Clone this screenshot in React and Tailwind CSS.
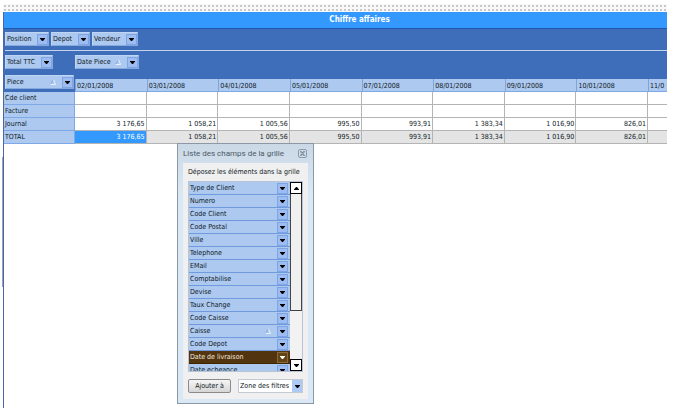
import React, { useState } from 'react';

const days = [
  { date: '02/01/2008', journal: '3 176,65' },
  { date: '03/01/2008', journal: '1 058,21' },
  { date: '04/01/2008', journal: '1 005,56' },
  { date: '05/01/2008', journal: '995,50' },
  { date: '07/01/2008', journal: '993,91' },
  { date: '08/01/2008', journal: '1 383,34' },
  { date: '09/01/2008', journal: '1 016,90' },
  { date: '10/01/2008', journal: '826,01' },
];

const rows = ['Cde client', 'Facture', 'Journal', 'TOTAL'];

const fields = [
  'Type de Client',
  'Numero',
  'Code Client',
  'Code Postal',
  'Ville',
  'Telephone',
  'EMail',
  'Comptabilise',
  'Devise',
  'Taux Change',
  'Code Caisse',
  'Caisse',
  'Code Depot',
  'Date de livraison',
  'Date echeance',
];

const Arrow = ({ up }) => (
  <svg width="5" height="3" viewBox="0 0 5 3" fill="currentColor" aria-hidden="true">
    {up ? <path d="M0 3V2.4L2 0H3L5 2.4V3Z" /> : <path d="M0 0H5V0.6L3 3H2L0 0.6Z" />}
  </svg>
);

const SortMark = () => (
  <svg width="6" height="6" viewBox="0 0 6 6" className="mr-1.5 shrink-0" aria-hidden="true">
    <path d="M0.5 5.5L3.5 0.5" stroke="#7f9fd6" strokeWidth="0.8" fill="none" />
    <path d="M3.5 0.5L5.5 5.5H0.5" stroke="#eef4fd" strokeWidth="0.9" fill="none" />
  </svg>
);

const FieldChip = ({ label, sorted, className = '' }) => (
  <button
    type="button"
    className={`flex h-[14px] items-center border border-[#bfd5f6] border-r-[#86a9e0] border-b-[#86a9e0] bg-[#adc9f0] pl-px text-left ${className}`}
  >
    <span className="grow whitespace-nowrap">{label}</span>
    {sorted && <SortMark />}
    <span className="flex h-[11px] w-[11px] shrink-0 items-center justify-center border border-[#7fa4e3] bg-[#9dbdf2] text-black">
      <Arrow />
    </span>
  </button>
);

const PivotGrid = () => (
  <table className="w-full table-fixed border-separate border-spacing-0">
    <colgroup>
      <col className="w-[71px]" />
      {days.map((day) => (
        <col key={day.date} />
      ))}
      <col className="w-[19px]" />
    </colgroup>
    <thead>
      <tr className="h-[17px] bg-[#3e6db9]">
        <th className="p-0 pr-px pl-px align-top font-normal">
          <FieldChip label="Piece" sorted className="w-full" />
        </th>
        {days.map((day) => (
          <th key={day.date} className="p-0 align-bottom font-normal">
            <div className="h-[13px] border-b border-l border-b-[#7fa9e6] border-l-[#7fa4dc] bg-[#adc9f0] pl-px text-left leading-[14px]">
              {day.date}
            </div>
          </th>
        ))}
        <th className="p-0 align-bottom font-normal">
          <div className="h-[13px] border-b border-l border-b-[#7fa9e6] border-l-[#7fa4dc] bg-[#adc9f0] pl-px text-left leading-[14px]">
            11/0
          </div>
        </th>
      </tr>
    </thead>
    <tbody>
      {rows.map((row) => {
        const total = row === 'TOTAL';
        const filled = total || row === 'Journal';
        return (
          <tr key={row} className={`h-[13px] ${total ? 'bg-[#e4e4e4]' : 'bg-white'}`}>
            <th className="border-r border-b border-[#7fa9e6] bg-[#adc9f0] p-0 pl-px text-left font-normal leading-3">
              {row}
            </th>
            {days.map((day, i) => (
              <td
                key={day.date}
                className={`border-r border-b border-[#b4b4b4] p-0 pr-px text-right leading-3 ${
                  total && i === 0 ? 'bg-[#3399ff] text-white' : ''
                }`}
              >
                {filled ? day.journal : ''}
              </td>
            ))}
            <td className="border-b border-[#b4b4b4] p-0"></td>
          </tr>
        );
      })}
    </tbody>
  </table>
);

const FieldList = ({ selected, onSelect }) => (
  <div className="flex h-[191px] border border-[#b8c4d4] bg-[#f2f2f2]">
    <ul className="grow overflow-hidden">
      {fields.map((field) => {
        const active = field === selected;
        return (
          <li key={field}>
            <button
              type="button"
              onClick={() => onSelect(field)}
              className={`flex h-[13px] w-full items-center border-b pl-px text-left ${
                active ? 'border-[#3d2500] bg-[#52340f] text-[#f3e9dc]' : 'border-[#6f9add] bg-[#adc9f0]'
              }`}
            >
              <span className="grow">{field}</span>
              {field === 'Caisse' && <SortMark />}
              <span
                className={`mr-0.5 flex h-[11px] w-[11px] items-center justify-center border ${
                  active ? 'border-[#8a6a3c] bg-[#654213] text-white' : 'border-[#7fa4e3] bg-[#9dbdf2] text-black'
                }`}
              >
                <Arrow />
              </span>
            </button>
          </li>
        );
      })}
    </ul>
    <div className="flex w-3 shrink-0 flex-col text-black">
      <button type="button" aria-label="Monter" className="flex h-3 items-center justify-center border border-black bg-white">
        <Arrow up />
      </button>
      <div className="h-[117px] border border-t-0 border-[#444] bg-[#f0f0f0]"></div>
      <div className="grow"></div>
      <button type="button" aria-label="Descendre" className="flex h-3 items-center justify-center border border-black bg-white">
        <Arrow />
      </button>
    </div>
  </div>
);

const FieldDialog = () => {
  const [selected, setSelected] = useState('Date de livraison');
  const [zone, setZone] = useState('Zone des filtres');

  return (
    <div
      role="dialog"
      aria-labelledby="dialog-title"
      className="absolute top-[143px] left-[177px] w-[137px] border border-[#8c98a6] bg-gradient-to-b from-[#cbd9e6] to-[#dae7f5] to-20% px-[5px] pb-1"
    >
      <div className="flex h-[19px] items-center justify-between">
        <h2 id="dialog-title" className="font-[Roboto,sans-serif] text-[8px] text-[#4c5a68]">
          Liste des champs de la grille
        </h2>
        <button
          type="button"
          aria-label="Fermer"
          className="mr-px flex h-[9px] w-[9px] items-center justify-center rounded-[2px] border border-[#8d9bab]"
        >
          <svg width="5" height="5" viewBox="0 0 5 5" fill="none" stroke="#6b7886" strokeWidth="0.8" aria-hidden="true">
            <path d="M0.5 0.5H1.5L2.5 2L3.5 0.5H4.5L3.2 2.5L4.5 4.5H3.5L2.5 3L1.5 4.5H0.5L1.8 2.5Z" />
          </svg>
        </button>
      </div>
      <div className="bg-[#f0f0f0] px-[5px] pb-1.5">
        <p className="flex h-[18px] items-center whitespace-nowrap">Déposez les éléments dans la grille</p>
        <FieldList selected={selected} onSelect={setSelected} />
        <div className="mt-[7px] flex items-center justify-between">
          <button
            type="button"
            className="h-[14px] w-[43px] rounded-[2px] border border-[#8a8a8a] bg-gradient-to-b from-[#f6f6f6] to-[#d6d6d6] leading-3"
          >
            Ajouter à
          </button>
          <div className="relative w-[65px]">
            <select
              aria-label="Zone"
              value={zone}
              onChange={(e) => setZone(e.target.value)}
              className="block h-[14px] w-full appearance-none border border-[#c3cad3] bg-white pl-px"
            >
              <option>Zone des filtres</option>
              <option>Zone des lignes</option>
              <option>Zone des colonnes</option>
            </select>
            <span className="pointer-events-none absolute inset-y-px right-px flex w-2.5 items-center justify-center bg-[#adc9f5] text-black">
              <Arrow />
            </span>
          </div>
        </div>
      </div>
    </div>
  );
};

const App = () => (
  <div className="relative min-h-screen bg-white pt-1 pr-1.5 pb-1 pl-0.5 font-['DejaVu_Sans_Condensed','Noto_Sans',sans-serif] text-[7px] leading-3 text-[#101a26]">
    <div className="flex min-h-[404px] flex-col">
      <div className="ml-px h-2 bg-[#f8f8f8] bg-[radial-gradient(#c8c8c8_1px,transparent_1px)] bg-size-[4px_4px]"></div>
      <div className="flex grow">
        <div className="flex w-px shrink-0 flex-col pt-[145px]">
          <div className="h-[130px] bg-[#98a2b4]"></div>
        </div>
        <main className="min-w-0 grow border-l border-[#4a67a8]">
          <h1 className="flex h-[17px] items-center justify-center border-b border-[#1f56b0] bg-[#3399ff] pl-12 text-[8px] font-bold text-white">
            Chiffre affaires
          </h1>
          <div className="bg-[#3e6db9] pl-px">
            <div className="flex h-[22px] gap-0.5 border-b border-[#c5d3ea] pt-[3px]">
              <FieldChip label="Position" className="w-11" />
              <FieldChip label="Depot" className="w-[39px]" />
              <FieldChip label="Vendeur" className="w-[46px]" />
            </div>
            <div className="flex h-6 pt-1">
              <div className="w-[70px]">
                <FieldChip label="Total TTC" className="w-12" />
              </div>
              <FieldChip label="Date Piece" sorted className="w-16" />
            </div>
          </div>
          <PivotGrid />
        </main>
      </div>
    </div>
    <FieldDialog />
  </div>
);

export default App;
